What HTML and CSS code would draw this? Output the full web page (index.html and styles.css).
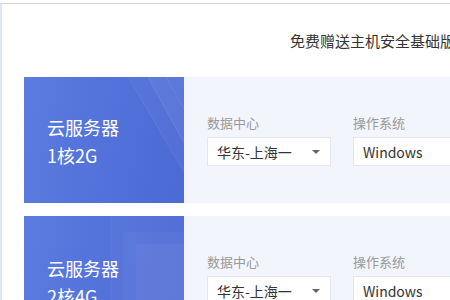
FILE: index.html
```html
<!DOCTYPE html>
<html lang="zh">
<head>
<meta charset="utf-8">
<link rel="stylesheet" href="styles.css">
</head>
<body>
<div class="page">
  <div class="frame">
    <div class="top"><span class="promo">免费赠送主机安全基础版</span></div>
    <div class="card">
      <div class="panel">
        <svg class="deco" width="160" height="126" viewBox="0 0 160 126">
          <polygon points="104,0 160,0 160,126 178,126" fill="#ffffff" opacity="0.04"/>
          <polygon points="124,0 160,0 160,66" fill="#ffffff" opacity="0.05"/>
          <line x1="104" y1="0" x2="178" y2="126" stroke="#ffffff" stroke-opacity="0.08"/>
          <line x1="124" y1="0" x2="160" y2="66" stroke="#ffffff" stroke-opacity="0.1"/>
          <line x1="142" y1="0" x2="160" y2="32" stroke="#ffffff" stroke-opacity="0.08"/>
        </svg>
        <div class="title">云服务器</div>
        <div class="title">1核2G</div>
      </div>
      <div class="body">
        <div class="field">
          <div class="label">数据中心</div>
          <div class="select"><span>华东-上海一</span><span class="caret"></span></div>
        </div>
        <div class="field">
          <div class="label">操作系统</div>
          <div class="select wide"><span>Windows</span></div>
        </div>
      </div>
    </div>
    <div class="card">
      <div class="panel">
        <svg class="deco" width="160" height="126" viewBox="0 0 160 126">
          <rect x="86" y="0" width="80" height="130" fill="#ffffff" opacity="0.03"/>
          <rect x="99" y="16" width="70" height="120" fill="#ffffff" opacity="0.03" stroke="#ffffff" stroke-opacity="0.07"/>
          <rect x="112" y="28" width="60" height="110" fill="#ffffff" opacity="0.04" stroke="#ffffff" stroke-opacity="0.08"/>
        </svg>
        <div class="title t2">云服务器</div>
        <div class="title">2核4G</div>
      </div>
      <div class="body">
        <div class="field">
          <div class="label">数据中心</div>
          <div class="select"><span>华东-上海一</span><span class="caret"></span></div>
        </div>
        <div class="field">
          <div class="label">操作系统</div>
          <div class="select wide"><span>Windows</span></div>
        </div>
      </div>
    </div>
  </div>
</div>
</body>
</html>
```

FILE: styles.css
```css
html, body {
  margin: 0;
  padding: 0;
  background: #ffffff;
  overflow: hidden;
  width: 450px;
  height: 300px;
}
body {
  font-family: "Noto Sans CJK SC", "Liberation Sans", sans-serif;
  color: #333;
}
.page {
  padding-top: 3px;
  height: 297px;
  overflow: hidden;
}
.frame {
  border-top: 1px solid #d4d4d4;
  border-left: 2px solid #dfe6f3;
  height: 100%;
  box-sizing: border-box;
  overflow: hidden;
}
.top {
  height: 73px;
  display: flex;
  align-items: center;
  padding-left: 288px;
  white-space: nowrap;
}
.promo {
  font-size: 15px;
  color: #333;
}
.card {
  margin-left: 22px;
  height: 126px;
  display: flex;
  margin-bottom: 13px;
  width: 600px;
}
.panel {
  position: relative;
  width: 160px;
  flex: none;
  box-sizing: border-box;
  padding: 36px 0 0 23px;
  background: linear-gradient(100deg, #5b7ce0 0%, #5170d9 60%, #4c69d4 100%);
  color: #fff;
  overflow: hidden;
}
.deco {
  position: absolute;
  left: 0;
  top: 0;
}
.title {
  position: relative;
  font-size: 18px;
  line-height: 28px;
}
.t2 { margin-top: 2px; }
.body {
  flex: 1;
  background: #f2f5fc;
  display: flex;
  gap: 22px;
  padding: 37px 0 0 23px;
}
.label {
  font-size: 13px;
  line-height: 18px;
  color: #999;
  margin-bottom: 5px;
}
.select {
  width: 124px;
  height: 29px;
  box-sizing: border-box;
  background: #fff;
  border: 1px solid #e3e6ee;
  display: flex;
  align-items: center;
  justify-content: space-between;
  padding: 0 10px 0 9px;
  font-size: 14px;
  color: #333;
}
.select.wide {
  width: 200px;
}
.caret {
  width: 0;
  height: 0;
  border-left: 4px solid transparent;
  border-right: 4px solid transparent;
  border-top: 4px solid #666;
}
```
